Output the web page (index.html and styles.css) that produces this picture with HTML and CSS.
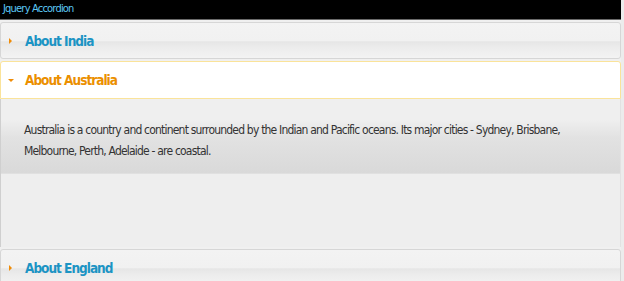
FILE: index.html
```html
<!DOCTYPE html>
<html lang="en">
<head>
  <meta charset="UTF-8" />
  <title>Jquery Accordion</title>
  <link rel="stylesheet" href="styles.css">
</head>
<body>

  <div class="titulo">Jquery Accordion</div>

  <div class="accordion">
    <h3 class="cabecera"><span class="flecha"></span>About India</h3>

    <h3 class="cabecera activa"><span class="flecha abajo"></span>About Australia</h3>
    <div class="panel">
      <p>Australia is a country and continent surrounded by the Indian and Pacific oceans. Its major cities - Sydney, Brisbane, Melbourne, Perth, Adelaide - are coastal.</p>
    </div>

    <h3 class="cabecera"><span class="flecha"></span>About England</h3>
  </div>

</body>
</html>
```

FILE: styles.css
```css
html {
  background-color: #ececec;
}
body {
  margin: 0;
  width: 621px;
  background-color: #f0f0f0;
  font-family: "DejaVu Sans Condensed", "DejaVu Sans", sans-serif;
}
.titulo {
  background-color: #000;
  color: #5cc8f5;
  font-size: 11px;
  letter-spacing: -0.8px;
  height: 19px;
  line-height: 17px;
  padding-left: 3px;
  border-bottom: 1px solid #6a6a6a;
  margin-bottom: 2px;
}
.accordion {
  display: flex;
  flex-direction: column;
  gap: 2px;
}
.cabecera {
  display: flex;
  align-items: center;
  margin: 0;
  height: 35px;
  padding-left: 8px;
  border: 1px solid #d6d6d6;
  border-radius: 3px;
  background: linear-gradient(#f3f3f3 0%, #f1f1f1 50%, #e6e6e6 54%, #ececec 70%, #f3f3f3 100%);
  color: #1c94c4;
  font-size: 13.5px;
  font-weight: bold;
  letter-spacing: -1px;
}
.cabecera.activa {
  height: 36px;
  border: 1px solid #fae39a;
  border-radius: 3px 3px 0 0;
  background: #fff;
  color: #eb8f00;
}
.flecha {
  width: 0;
  height: 0;
  border-top: 3px solid transparent;
  border-bottom: 3px solid transparent;
  border-left: 3px solid #ef8c08;
  margin-right: 13px;
}
.flecha.abajo {
  border-left: 3px solid transparent;
  border-right: 3px solid transparent;
  border-top: 3px solid #ef8c08;
  border-bottom: none;
  margin-left: -1px;
  margin-right: 11px;
}
.panel {
  margin-top: -2px;
  height: 148px;
  border-left: 1px solid #cfcfcf;
  border-right: 1px solid #e2e2e2;
  background: linear-gradient(#efefef 0%, #efefef 14%, #e2e2e2 26%, #d9d9d9 50%, #eeeeee 51%, #eeeeee 100%);
  padding: 0 23px;
}
.panel p {
  margin: 21px 0 0;
  color: #333;
  font-size: 12px;
  letter-spacing: -0.8px;
  line-height: 21px;
}
```
